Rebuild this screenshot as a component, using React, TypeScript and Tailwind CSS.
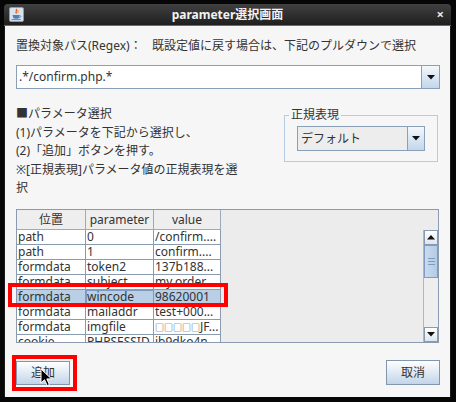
import React from "react";

const rows: [string, string, React.ReactNode][] = [
  ["path", "0", "/confirm...."],
  ["path", "1", "confirm...."],
  ["formdata", "token2", "137b188..."],
  ["formdata", "subject", "my.order"],
  ["formdata", "wincode", "98620001"],
  ["formdata", "mailaddr", "test+000..."],
  [
    "formdata",
    "imgfile",
    <>
      <span className="text-[9px]">□□□□□</span>JF...
    </>,
  ],
  ["cookie", "PHPSESSID", "ib9dko4n..."],
];

function DownArrow() {
  return (
    <svg width="8" height="5" viewBox="0 0 8 5">
      <path d="M0 0 L8 0 L4 4.5 Z" fill="#111" />
    </svg>
  );
}

function UpArrow() {
  return (
    <svg width="8" height="5" viewBox="0 0 8 5">
      <path d="M0 4.5 L8 4.5 L4 0 Z" fill="#111" />
    </svg>
  );
}

function JavaIcon() {
  return (
    <svg width="15" height="15" viewBox="0 0 15 15">
      <rect x="0.5" y="0.5" width="14" height="14" rx="1.5" fill="#d9e3ee" stroke="#8b9bb0" />
      <path d="M7 2 C9 3.5 5.5 4.5 7.5 6.5" stroke="#e2541a" strokeWidth="1.2" fill="none" />
      <path d="M8.8 3 C10 4.3 8 5 9 6.3" stroke="#e98a1c" strokeWidth="1" fill="none" />
      <path d="M3.5 8 L10.5 8 L10 11 C9.6 12 5 12 4.3 11 Z" fill="#4f7fb6" />
      <path d="M10.3 8.6 C12.4 8.4 12.4 10.6 9.9 10.8" stroke="#4f7fb6" strokeWidth="0.9" fill="none" />
      <path d="M2.5 12.6 L11.8 12.6" stroke="#4f7fb6" strokeWidth="0.9" />
    </svg>
  );
}

function Cursor() {
  return (
    <svg width="13" height="19" viewBox="0 0 13 19">
      <path
        d="M1 1 L1 15 L4.5 11.7 L7.2 17.6 L9.4 16.6 L6.8 10.9 L11.5 10.9 Z"
        fill="#000"
        stroke="#fff"
        strokeWidth="1"
        strokeLinejoin="round"
      />
    </svg>
  );
}

export default function App() {
  return (
    <div className="relative w-[456px] h-[402px] overflow-hidden bg-[#060606] pt-[4px] pl-[4px] font-['Noto_Sans','Noto_Sans_CJK_JP',sans-serif] text-[#333333]">
      <div className="flex h-[393px] w-[447px] flex-col rounded-t-[4px] bg-[#1b1b1b]">
        {/* title bar */}
        <div className="grid h-[22px] grid-cols-[1fr_auto_1fr] items-center rounded-t-[4px] border-b border-[#56708c] bg-gradient-to-b from-[#414141] to-[#1f1f1f]">
          <div className="flex pl-[5px]">
            <JavaIcon />
          </div>
          <div className="text-[12px] font-bold leading-none text-[#f2f2f2]">parameter選択画面</div>
          <div className="flex justify-end pr-[7px] text-[13px] font-bold leading-none text-[#e8e8e8]">
            ×
          </div>
        </div>

        {/* content */}
        <div className="mx-[1px] flex-1 bg-[#f6f6f6] pl-[11px] pr-[10px] pt-[11px] text-[12px]">
          <div className="flex h-[18px] items-center whitespace-nowrap leading-[18px]">
            <span className="w-[136px]">置換対象パス(Regex)：</span>
            <span>既設定値に戻す場合は、下記のプルダウンで選択</span>
          </div>

          {/* editable combo */}
          <div className="mt-[10px] flex h-[24px] border border-[#8aa0b9] bg-white">
            <div className="flex flex-1 items-center pl-[2px]">.*/confirm.php.*</div>
            <div className="flex w-[18px] items-center justify-center border-l border-[#8aa0b9] bg-gradient-to-b from-[#f4f8fc] to-[#c3d6ea]">
              <DownArrow />
            </div>
          </div>

          <div className="mt-[16px] flex h-[93px] justify-between">
            <div className="leading-[18.5px] whitespace-nowrap">
              <div>■パラメータ選択</div>
              <div>(1)パラメータを下記から選択し、</div>
              <div>(2)「追加」ボタンを押す。</div>
              <div>※[正規表現]パラメータ値の正規表現を選</div>
              <div>択</div>
            </div>

            {/* group box */}
            <div className="relative mr-[2px] mt-[10px] h-[47px] w-[154px] border border-[#b5cbe2] pl-[12px] pt-[10px]">
              <span className="absolute left-[4px] top-[-8px] bg-[#f6f6f6] px-[2px] leading-[14px]">正規表現</span>
              <div className="flex h-[25px] w-[128px] border border-[#8aa0b9] bg-[#ededed]">
                <div className="flex flex-1 items-center pl-[3px]">デフォルト</div>
                <div className="flex w-[17px] items-center justify-center border-l border-[#8aa0b9] bg-gradient-to-b from-[#f4f8fc] to-[#c3d6ea]">
                  <DownArrow />
                </div>
              </div>
            </div>
          </div>

          {/* table scroll pane */}
          <div className="mt-[11px] flex h-[134px] w-[423px] flex-col border border-[#8a9bb0] bg-[#ececec]">
            <div className="flex h-[20px] shrink-0">
              <div className="flex w-[69px] items-center justify-center border-b border-r border-[#9aabbd] bg-[#eeeeee]">位置</div>
              <div className="flex w-[68px] items-center justify-center border-b border-r border-[#9aabbd] bg-[#eeeeee]">parameter</div>
              <div className="flex w-[67px] items-center justify-center border-b border-r border-[#9aabbd] bg-[#eeeeee]">value</div>
              <div className="flex-1" />
            </div>
            <div className="flex min-h-0 flex-1">
              <div className="flex-1 overflow-hidden">
                {rows.map((r, i) => {
                  const sel = i === 4;
                  return (
                    <div
                      key={i}
                      className={
                        "flex h-[15px] w-[204px] border-b border-[#8a9bb0] leading-[14px] " +
                        (sel ? "bg-[#b8cfe5]" : "bg-white")
                      }
                    >
                      <div className="w-[69px] overflow-hidden whitespace-nowrap border-r border-[#8a9bb0] pl-[1px]">{r[0]}</div>
                      <div
                        className={
                          "w-[68px] overflow-hidden whitespace-nowrap border-r border-[#8a9bb0] pl-[1px] " +
                          (sel ? "outline outline-1 -outline-offset-1 outline-[#7d99c2]" : "")
                        }
                      >
                        {r[1]}
                      </div>
                      <div className="w-[67px] overflow-hidden whitespace-nowrap border-r border-[#8a9bb0] pl-[1px]">{r[2]}</div>
                    </div>
                  );
                })}
              </div>

              {/* scrollbar */}
              <div className="flex w-[15px] flex-col border-l border-[#a9b9ca] bg-[#eeeeee]">
                <div className="flex h-[15px] items-center justify-center border border-[#8a9bb0] bg-gradient-to-b from-white to-[#dce7f2]">
                  <UpArrow />
                </div>
                <div className="flex h-[33px] flex-col items-center justify-center gap-[2px] border border-[#7f9bc4] bg-gradient-to-r from-[#c9dcf0] to-[#b3cbe4]">
                  <div className="h-px w-[7px] bg-[#7f9bc4]" />
                  <div className="h-px w-[7px] bg-[#7f9bc4]" />
                  <div className="h-px w-[7px] bg-[#7f9bc4]" />
                </div>
                <div className="flex-1" />
                <div className="flex h-[15px] items-center justify-center border border-[#8a9bb0] bg-gradient-to-b from-white to-[#dce7f2]">
                  <DownArrow />
                </div>
              </div>
            </div>
          </div>

          {/* buttons */}
          <div className="mt-[17px] flex h-[25px] justify-between">
            <button className="mt-[1px] flex h-[24px] w-[54px] items-center justify-center border border-[#8296ad] bg-gradient-to-b from-white to-[#c2d5e9]">
              追加
            </button>
            <button className="flex h-[25px] w-[54px] items-center justify-center border border-[#8296ad] bg-gradient-to-b from-white to-[#c2d5e9]">
              取消
            </button>
          </div>
        </div>
      </div>

      {/* annotations */}
      <div className="absolute left-[8px] top-[283px] h-[24px] w-[220px] border-4 border-[#ff0000]" />
      <div className="absolute left-[12px] top-[355px] h-[36px] w-[65px] border-4 border-[#ff0000]" />
      <div className="absolute left-[40px] top-[368px]">
        <Cursor />
      </div>
    </div>
  );
}
